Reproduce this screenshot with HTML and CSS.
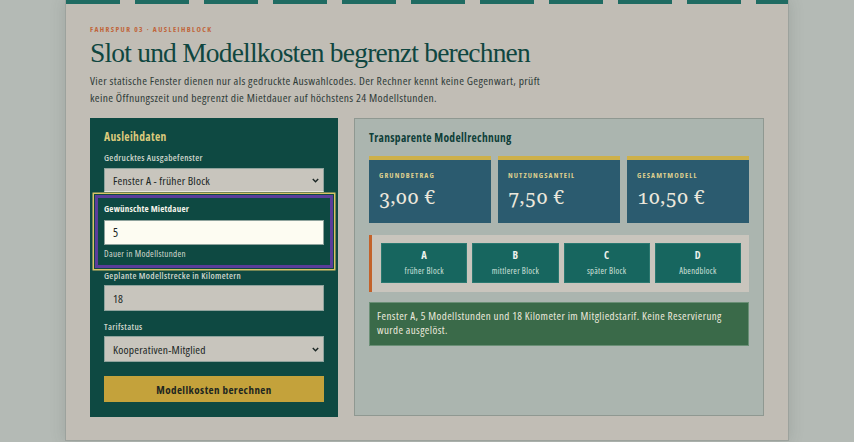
FILE: index.html
```html
<!DOCTYPE html>
<html lang="de">
<head>
<meta charset="utf-8">
<title>Slot und Modellkosten begrenzt berechnen</title>
<link rel="stylesheet" href="styles.css">
</head>
<body>
<main class="page">
  <div class="stripe"></div>
  <header class="intro">
    <p class="eyebrow">FAHRSPUR 03 · AUSLEIHBLOCK</p>
    <h1 class="title">Slot und Modellkosten begrenzt berechnen</h1>
    <p class="lead">Vier statische Fenster dienen nur als gedruckte Auswahlcodes. Der Rechner kennt keine Gegenwart, prüft keine Öffnungszeit und begrenzt die Mietdauer auf höchstens 24 Modellstunden.</p>
  </header>
  <div class="layout">
    <form class="form-panel">
      <h2 class="form-title">Ausleihdaten</h2>
      <label class="label label-first" for="fenster">Gedrucktes Ausgabefenster</label>
      <div class="select-wrap">
        <select id="fenster" class="control select">
          <option>Fenster A - früher Block</option>
          <option>Fenster B - mittlerer Block</option>
          <option>Fenster C - später Block</option>
          <option>Fenster D - Abendblock</option>
        </select>
        <svg class="chevron" width="7" height="5" viewBox="0 0 7 5" aria-hidden="true"><path d="M0.8 1 L3.5 3.8 L6.2 1" fill="none" stroke="#1b2624" stroke-width="1.4"/></svg>
      </div>
      <div class="focus-field">
        <label class="label label-strong" for="dauer">Gewünschte Mietdauer</label>
        <input id="dauer" class="control input input-active" type="text" value="5">
        <span class="hint">Dauer in Modellstunden</span>
      </div>
      <label class="label label-after-focus" for="strecke">Geplante Modellstrecke in Kilometern</label>
      <input id="strecke" class="control input" type="text" value="18">
      <label class="label label-gap" for="tarif">Tarifstatus</label>
      <div class="select-wrap">
        <select id="tarif" class="control select select-tall">
          <option>Kooperativen-Mitglied</option>
          <option>Standardtarif</option>
        </select>
        <svg class="chevron" width="7" height="5" viewBox="0 0 7 5" aria-hidden="true"><path d="M0.8 1 L3.5 3.8 L6.2 1" fill="none" stroke="#1b2624" stroke-width="1.4"/></svg>
      </div>
      <button type="button" class="submit">Modellkosten berechnen</button>
    </form>
    <section class="result-panel">
      <h2 class="result-title">Transparente Modellrechnung</h2>
      <div class="cards">
        <div class="card">
          <span class="card-label">GRUNDBETRAG</span>
          <span class="card-value">3,00 €</span>
        </div>
        <div class="card">
          <span class="card-label">NUTZUNGSANTEIL</span>
          <span class="card-value">7,50 €</span>
        </div>
        <div class="card">
          <span class="card-label">GESAMTMODELL</span>
          <span class="card-value">10,50 €</span>
        </div>
      </div>
      <div class="slots">
        <div class="slot"><strong class="slot-code">A</strong><span class="slot-name">früher Block</span></div>
        <div class="slot"><strong class="slot-code">B</strong><span class="slot-name">mittlerer Block</span></div>
        <div class="slot"><strong class="slot-code">C</strong><span class="slot-name">später Block</span></div>
        <div class="slot"><strong class="slot-code">D</strong><span class="slot-name">Abendblock</span></div>
      </div>
      <p class="message">Fenster A, 5 Modellstunden und 18 Kilometer im Mitgliedstarif. Keine Reservierung wurde ausgelöst.</p>
    </section>
  </div>
</main>
</body>
</html>
```
FILE: styles.css
```css
* { box-sizing: border-box; }
html, body { margin: 0; padding: 0; }
body {
  background: #b4bab5;
  font-family: "Open Sans", "Noto Sans", sans-serif;
  font-stretch: condensed;
  letter-spacing: 0.3px;
  color: #2f3a37;
  height: 442px;
  overflow: hidden;
}
.page {
  width: 724px;
  height: 441px;
  margin: 0 auto;
  background: #c1bdb5;
  border-left: 1px solid #9ca29d;
  border-right: 1px solid #9ca29d;
  border-bottom: 1px solid #9ca29d;
  box-shadow: 0 0 14px rgba(60, 70, 65, 0.18);
  padding: 0 24px;
}
.stripe {
  height: 4px;
  margin: 0 -24px;
  background: repeating-linear-gradient(90deg, #1f6b62 0 54px, transparent 54px 69px);
}
.intro { padding-top: 20px; }
.eyebrow {
  margin: 0;
  font-size: 7.5px;
  line-height: 10px;
  font-weight: 700;
  letter-spacing: 1.4px;
  color: #c0653a;
}
.title {
  margin: 3px 0 0;
  font-family: "Liberation Serif", "Noto Serif", serif;
  font-stretch: normal;
  font-weight: 400;
  font-size: 27.5px;
  line-height: 32px;
  letter-spacing: -0.8px;
  color: #0f4640;
}
.lead {
  margin: 3px 0 0;
  max-width: 462px;
  font-size: 11.5px;
  line-height: 17px;
  letter-spacing: 0.36px;
  color: #2f3b38;
}
.layout {
  margin-top: 12px;
  display: grid;
  grid-template-columns: 248px 410px;
  gap: 16px;
  align-items: start;
}
.form-panel {
  background: #0e4942;
  padding: 11px 14px 15px;
  display: flex;
  flex-direction: column;
  height: 299px;
}
.form-title {
  margin: 0;
  font-size: 11.5px;
  line-height: 16px;
  font-weight: 700;
  letter-spacing: 0.35px;
  color: #dccb7c;
}
.label {
  display: block;
  font-size: 9px;
  line-height: 12px;
  color: #cfd6cc;
  font-weight: 600;
  letter-spacing: 0.35px;
}
.label-first { margin-top: 7px; margin-bottom: 4px; }
.label-strong { color: #f4f3ea; font-weight: 700; margin-bottom: 5px; letter-spacing: 0.2px; }
.label-after-focus { margin-top: 2px; margin-bottom: 3px; }
.label-gap { margin-top: 10px; margin-bottom: 3px; }
.control {
  display: block;
  width: 100%;
  font-family: inherit;
  font-stretch: condensed;
  letter-spacing: 0.2px;
  color: #1b2624;
  border: 1px solid #8fa39d;
  background: #c8c5bd;
  border-radius: 0;
  margin: 0;
  outline: none;
}
.select-wrap { position: relative; }
.select {
  -webkit-appearance: none;
  appearance: none;
  height: 24px;
  font-size: 11.5px;
  padding: 0 20px 0 8px;
  border-bottom-color: #e8e6de;
}
.select-tall { height: 26px; border-bottom-color: #8fa39d; }
.chevron {
  position: absolute;
  right: 5px;
  top: 50%;
  margin-top: -2px;
}
.input {
  height: 26px;
  font-size: 11.5px;
  padding: 0 8px;
}
.input-active {
  height: 25px;
  background: #fdfcf2;
  font-size: 12px;
}
.focus-field {
  margin: 3px -9px 0;
  padding: 5px 6px 5px;
  border: 3px solid #5a3d9a;
  box-shadow: 0 0 0 1px #0e4942, 0 0 0 2.5px #d9c466;
  display: flex;
  flex-direction: column;
}
.hint {
  margin-top: 3px;
  font-size: 9px;
  line-height: 12px;
  letter-spacing: 0.3px;
  color: #d5d9cf;
}
.submit {
  margin-top: 14px;
  height: 26px;
  border: 0;
  background: #c4a23b;
  color: #1d2620;
  font-family: inherit;
  font-stretch: condensed;
  font-weight: 700;
  font-size: 11px;
  letter-spacing: 0.45px;
  border-radius: 0;
}
.result-panel {
  background: #abb5af;
  border: 1px solid #8f9891;
  padding: 11px 14px 14px;
  height: 298px;
}
.result-title {
  margin: 0;
  font-size: 11.5px;
  line-height: 16px;
  font-weight: 700;
  letter-spacing: 0.3px;
  color: #0f3f39;
}
.cards {
  margin-top: 10px;
  display: grid;
  grid-template-columns: repeat(3, 1fr);
  gap: 7px;
}
.card {
  height: 67px;
  background: #2b5b6f;
  border-top: 4px solid #cdb04a;
  padding: 9px 10px 0;
  display: flex;
  flex-direction: column;
}
.card-label {
  font-size: 7.5px;
  line-height: 12px;
  font-weight: 700;
  letter-spacing: 1.1px;
  color: #decf8e;
}
.card-value {
  margin-top: 3px;
  font-family: "Noto Serif", "Liberation Serif", serif;
  font-stretch: normal;
  font-variant-numeric: oldstyle-nums;
  font-size: 20px;
  line-height: 26px;
  letter-spacing: 0;
  color: #ebe7dc;
}
.slots {
  margin-top: 12px;
  background: #c9c5bd;
  border-left: 3px solid #c3622a;
  padding: 8px 8px 9px 9px;
  display: grid;
  grid-template-columns: repeat(4, 1fr);
  gap: 5px;
}
.slot {
  height: 40px;
  background: #17665f;
  border: 1px solid #2a7870;
  display: flex;
  flex-direction: column;
  align-items: center;
  padding-top: 4px;
  color: #eef2ee;
}
.slot-code {
  font-size: 10.5px;
  line-height: 14px;
  font-weight: 700;
}
.slot-name {
  margin-top: 3px;
  font-size: 8.5px;
  line-height: 12px;
  letter-spacing: 0.3px;
  color: #d3e2dc;
}
.message {
  margin: 10px 0 0;
  background: #3a6a49;
  border: 1px solid #6a8f76;
  padding: 6px 7px 8px;
  font-size: 11px;
  line-height: 14px;
  letter-spacing: 0.4px;
  color: #ece9dd;
}
```
